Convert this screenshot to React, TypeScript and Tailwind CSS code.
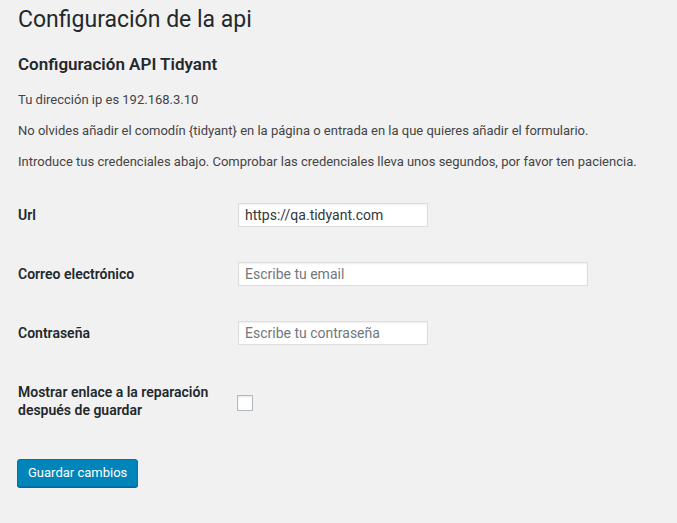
import React from 'react';

const inputCls =
  'h-[24px] border border-[#ddd] bg-white px-[6px] text-[14px] text-[#32373c] placeholder:text-[#72777c] shadow-[inset_0_1px_2px_rgba(0,0,0,0.07)] outline-none';

export default function App() {
  return (
    <main
      className="min-h-[523px] bg-[#f1f1f1] pl-[18px] pr-5 pt-[5px] text-[#444]"
      style={{ fontFamily: 'Roboto, "Noto Sans", sans-serif' }}
    >
      <h1 className="text-[23px] leading-[29px] font-normal text-[#23282d]">Configuración de la api</h1>

      <h2 className="mt-[19px] text-[17px] leading-[22px] font-semibold text-[#23282d]">Configuración API Tidyant</h2>

      <div className="mt-[16px] text-[13px] leading-[18px]">
        <p>Tu dirección ip es 192.168.3.10</p>
        <p className="mt-[13px]">No olvides añadir el comodín {'{tidyant}'} en la página o entrada en la que quieres añadir el formulario.</p>
        <p className="mt-[13px]">Introduce tus credenciales abajo. Comprobar las credenciales lleva unos segundos, por favor ten paciencia.</p>
      </div>

      <form className="mt-[32px]" onSubmit={e => e.preventDefault()}>
        <div className="flex h-[59px]">
          <label className="w-[220px] text-[14px] leading-[24px] font-semibold text-[#23282d]">Url</label>
          <input className={`${inputCls} w-[190px]`} defaultValue="https://qa.tidyant.com" />
        </div>
        <div className="flex h-[59px]">
          <label className="w-[220px] text-[14px] leading-[24px] font-semibold text-[#23282d]">Correo electrónico</label>
          <input className={`${inputCls} w-[350px]`} placeholder="Escribe tu email" />
        </div>
        <div className="flex h-[59px]">
          <label className="w-[220px] text-[14px] leading-[24px] font-semibold text-[#23282d]">Contraseña</label>
          <input type="password" className={`${inputCls} w-[190px]`} placeholder="Escribe tu contraseña" />
        </div>
        <div className="flex items-start pt-[3px]">
          <label className="w-[219px] pr-[10px] text-[14px] leading-[18px] font-semibold text-[#23282d]">
            Mostrar enlace a la reparación después de guardar
          </label>
          <input
            type="checkbox"
            className="mt-[12px] h-[16px] w-[16px] appearance-none border border-[#b4b9be] bg-white shadow-[inset_0_1px_2px_rgba(0,0,0,0.1)]"
          />
        </div>

        <button
          type="submit"
          className="mt-[40px] -ml-[1px] h-[28px] rounded-[3px] border border-[#0073aa] bg-[#0085ba] px-[10px] text-[13px] leading-[26px] text-white shadow-[0_1px_0_#006799]"
        >
          Guardar cambios
        </button>
      </form>
    </main>
  );
}
